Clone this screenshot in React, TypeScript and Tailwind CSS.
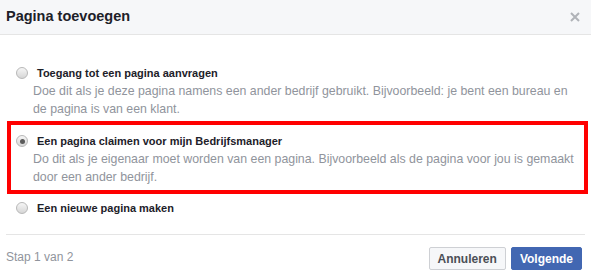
const options = [
  {
    title: "Toegang tot een pagina aanvragen",
    desc: "Doe dit als je deze pagina namens een ander bedrijf gebruikt. Bijvoorbeeld: je bent een bureau en de pagina is van een klant.",
    checked: false,
  },
  {
    title: "Een pagina claimen voor mijn Bedrijfsmanager",
    desc: "Do dit als je eigenaar moet worden van een pagina. Bijvoorbeeld als de pagina voor jou is gemaakt door een ander bedrijf.",
    checked: true,
    highlight: true,
  },
  { title: "Een nieuwe pagina maken", desc: "", checked: false },
];

function Radio({ checked }: { checked: boolean }) {
  return (
    <span className="flex h-[12px] w-[12px] shrink-0 items-center justify-center rounded-full border border-[#b8b8b8] bg-gradient-to-b from-[#f6f6f6] to-[#d6d6d6]">
      {checked && <span className="h-[5px] w-[5px] rounded-full bg-[#5a5a5a]" />}
    </span>
  );
}

export default function App() {
  return (
    <div className="flex h-[278px] w-[591px] flex-col bg-white font-['Liberation_Sans',Arial,sans-serif]">
      {/* Header */}
      <div className="flex h-[35px] items-center justify-between border-b border-[#e5e5e5] bg-[#f6f7f9] pl-[6px] pr-[11px]">
        <span className="text-[14.5px] font-bold text-[#1d2129]">Pagina toevoegen</span>
        <svg width="10" height="10" viewBox="0 0 10 10" className="text-[#b0b3b8]">
          <path d="M1 1 L9 9 M9 1 L1 9" stroke="currentColor" strokeWidth="2" />
        </svg>
      </div>

      {/* Options */}
      <div className="flex flex-col pt-[30px]">
        {options.map((o) => (
          <div
            key={o.title}
            className={
              o.highlight
                ? "ml-[7px] mr-[3px] mt-[3px] mb-[6px] border-4 border-[#ff0000] pb-[4px] pt-[8px]"
                : "ml-[7px] mr-[3px] border-x-4 border-transparent"
            }
          >
            <div className="flex items-center pl-[5px]">
              <Radio checked={o.checked} />
              <span className="ml-[9px] text-[11px] font-bold leading-[16px] text-[#1d2129]">{o.title}</span>
            </div>
            {o.desc && (
              <div className="mt-[1px] pl-[22px] pr-[8px] text-[12.35px] leading-[18px] text-[#90949c]">
                {o.desc}
              </div>
            )}
          </div>
        ))}
      </div>

      {/* Footer */}
      <div className="mx-[6px] mt-auto flex items-start justify-between border-t border-[#e5e5e5] pb-[8px] pt-[12px] pr-[3px]">
        <span className="pt-[1px] text-[12px] text-[#90949c]">Stap 1 van 2</span>
        <div className="flex gap-[5px]">
          <button className="h-[23px] rounded-[2px] border border-[#ced0d4] bg-[#f6f7f9] px-[8px] text-[12px] font-bold text-[#4b4f56]">
            Annuleren
          </button>
          <button className="h-[23px] rounded-[2px] border border-[#4267b2] bg-[#4267b2] px-[8px] text-[12px] font-bold text-white">
            Volgende
          </button>
        </div>
      </div>
    </div>
  );
}
